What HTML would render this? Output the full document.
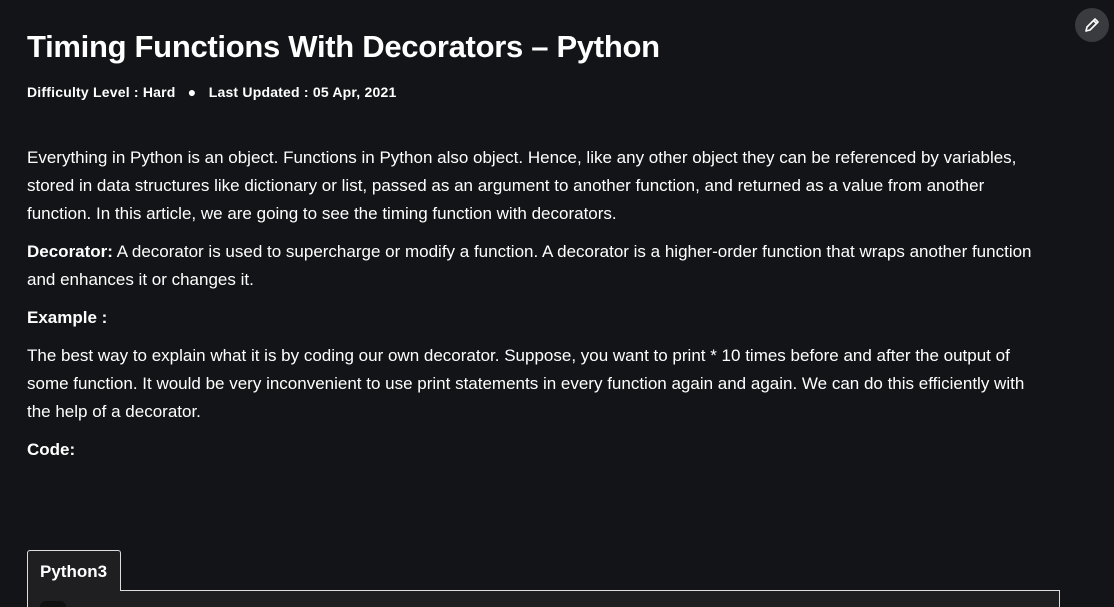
<!DOCTYPE html>
<html style="overflow:hidden"><head><style>
html,body{margin:0;width:1114px;height:607px;overflow:hidden}
body{background:#131417;color:#fff;font-family:"Liberation Sans",sans-serif;position:relative}
h1{position:absolute;left:27px;top:29px;margin:0;font-size:31px;font-weight:bold;letter-spacing:-0.3px}
.meta{position:absolute;left:27px;top:84px;font-size:14px;font-weight:bold;letter-spacing:0.2px}
.p{position:absolute;left:27px;font-size:17px;line-height:28px;white-space:nowrap;letter-spacing:0}
b{font-weight:bold}
.edit{position:absolute;left:1075px;top:8px;width:34px;height:34px;border-radius:50%;background:#3a3b3f}
.tab{position:absolute;left:27px;top:550px;width:94px;height:41px;border:1px solid #ddd;border-bottom:none;border-radius:3px 3px 0 0;background:#1f1f21;font-size:17px;font-weight:bold;box-sizing:border-box;padding:11px 0 0 12px;z-index:2}
.box{position:absolute;left:27px;top:590px;width:1031px;height:17px;border-top:1px solid #ddd;border-right:1px solid #ddd;border-left:1px solid #ddd;background:#1f1f21}
.circ{position:absolute;left:40px;top:601px;width:26px;height:6px;border-radius:13px 13px 0 0;background:#111}
</style></head><body>
<div class="edit"><svg width="34" height="34" viewBox="0 0 34 34"><path d="M11 23 L12 19 L20 11 L23 14 L15 22 Z M18.5 12.5 L21.5 15.5" fill="none" stroke="#fff" stroke-width="1.6" stroke-linejoin="round"/></svg></div>
<h1>Timing Functions With Decorators – Python</h1>
<div class="meta">Difficulty Level : Hard &nbsp;&nbsp;●&nbsp;&nbsp; Last Updated : 05 Apr, 2021</div>
<div class="p" style="top:144px">Everything in Python is an object. Functions in Python also object. Hence, like any other object they can be referenced by variables,<br>stored in data structures like dictionary or list, passed as an argument to another function, and returned as a value from another<br>function. In this article, we are going to see the timing function with decorators.</div>
<div class="p" style="top:238px"><b>Decorator:</b> A decorator is used to supercharge or modify a function. A decorator is a higher-order function that wraps another function<br>and enhances it or changes it.</div>
<div class="p" style="top:304px"><b>Example :</b></div>
<div class="p" style="top:342px">The best way to explain what it is by coding our own decorator. Suppose, you want to print * 10 times before and after the output of<br>some function. It would be very inconvenient to use print statements in every function again and again. We can do this efficiently with<br>the help of a decorator.</div>
<div class="p" style="top:436px"><b>Code:</b></div>
<div class="box"></div>
<div class="tab">Python3</div>
<div class="circ"></div>
</body></html>
